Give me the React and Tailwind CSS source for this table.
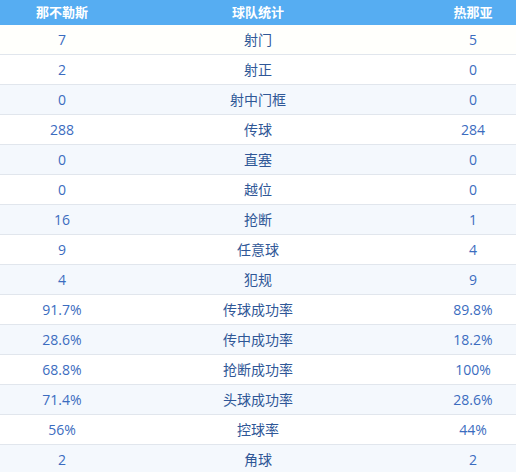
import React from 'react';

const stats = [
  ['7', '射门', '5'],
  ['2', '射正', '0'],
  ['0', '射中门框', '0'],
  ['288', '传球', '284'],
  ['0', '直塞', '0'],
  ['0', '越位', '0'],
  ['16', '抢断', '1'],
  ['9', '任意球', '4'],
  ['4', '犯规', '9'],
  ['91.7%', '传球成功率', '89.8%'],
  ['28.6%', '传中成功率', '18.2%'],
  ['68.8%', '抢断成功率', '100%'],
  ['71.4%', '头球成功率', '28.6%'],
  ['56%', '控球率', '44%'],
  ['2', '角球', '2'],
];

function StatRow({ row, index }) {
  const bg = index === 0 ? 'bg-[#fffffc]' : index % 2 === 0 ? 'bg-[#f4f8fd]' : 'bg-white';
  return (
    <div className={`grid grid-cols-[124px_268px_162px] h-[30px] items-center border-b border-[#e1e6ed] ${bg}`}>
      <div className="text-center text-[#3b6cc0]">{row[0]}</div>
      <div className="text-center text-[#2f5797]">{row[1]}</div>
      <div className="text-center text-[#3b6cc0]">{row[2]}</div>
    </div>
  );
}

export default function App() {
  return (
    <div className="w-[516px] h-[472px] overflow-hidden bg-white">
      <div
        className="w-[554px] text-[14px]"
        style={{ fontFamily: '"Open Sans", "Noto Sans CJK SC", sans-serif' }}
      >
        {/* Header */}
        <div className="grid grid-cols-[124px_268px_162px] h-[25px] items-center bg-[#56adf2] text-white font-bold text-[13px]">
          <div className="text-center">那不勒斯</div>
          <div className="text-center">球队统计</div>
          <div className="text-center">热那亚</div>
        </div>

        {stats.map((row, i) => (
          <StatRow key={i} row={row} index={i} />
        ))}
      </div>
    </div>
  );
}
